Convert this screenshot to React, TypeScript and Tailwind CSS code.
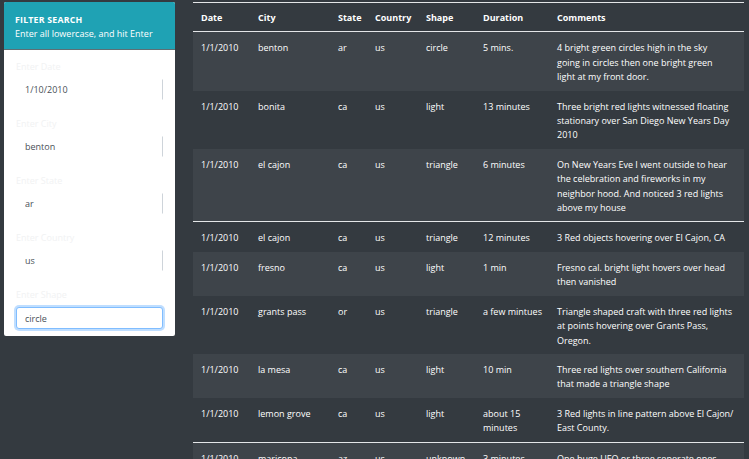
import React from 'react'

interface Sighting {
  date: string
  city: string
  state: string
  country: string
  shape: string
  duration: string
  comments: string
  ruled?: boolean
}

const SIGHTINGS: Sighting[] = [
  { date: '1/1/2010', city: 'benton', state: 'ar', country: 'us', shape: 'circle', duration: '5 mins.', comments: '4 bright green circles high in the sky\ngoing in circles then one bright green\nlight at my front door.' },
  { date: '1/1/2010', city: 'bonita', state: 'ca', country: 'us', shape: 'light', duration: '13 minutes', comments: 'Three bright red lights witnessed floating stationary over San Diego New Years Day 2010' },
  { date: '1/1/2010', city: 'el cajon', state: 'ca', country: 'us', shape: 'triangle', duration: '6 minutes', comments: 'On New Years Eve I went outside to hear the celebration and fireworks in my neighbor hood. And noticed 3 red lights above my house' },
  { date: '1/1/2010', city: 'el cajon', state: 'ca', country: 'us', shape: 'triangle', duration: '12 minutes', comments: '3 Red objects hovering over El Cajon, CA', ruled: true },
  { date: '1/1/2010', city: 'fresno', state: 'ca', country: 'us', shape: 'light', duration: '1 min', comments: 'Fresno cal. bright light hovers over head then vanished' },
  { date: '1/1/2010', city: 'grants pass', state: 'or', country: 'us', shape: 'triangle', duration: 'a few mintues', comments: 'Triangle shaped craft with three red lights at points hovering over Grants Pass, Oregon.' },
  { date: '1/1/2010', city: 'la mesa', state: 'ca', country: 'us', shape: 'light', duration: '10 min', comments: 'Three red lights over southern California that made a triangle shape' },
  { date: '1/1/2010', city: 'lemon grove', state: 'ca', country: 'us', shape: 'light', duration: 'about 15 minutes', comments: '3 Red lights in line pattern above El Cajon/ East County.' },
  { date: '1/1/2010', city: 'maricopa', state: 'az', country: 'us', shape: 'unknown', duration: '3 minutes', comments: 'One huge UFO or three seperate ones flying in a tight formation over the desert', ruled: true },
]

const FILTERS = [
  { label: 'Enter Date', value: '1/10/2010' },
  { label: 'Enter City', value: 'benton' },
  { label: 'Enter State', value: 'ar' },
  { label: 'Enter Country', value: 'us' },
  { label: 'Enter Shape', value: 'circle', focused: true },
]

const COLUMNS = [
  { label: 'Date', w: 'w-[57px]' },
  { label: 'City', w: 'w-[80px]' },
  { label: 'State', w: 'w-[37px]' },
  { label: 'Country', w: 'w-[51px]' },
  { label: 'Shape', w: 'w-[57px]' },
  { label: 'Duration', w: 'w-[74px]' },
  { label: 'Comments', w: 'w-[195px]' },
]

export default function App() {
  return (
    <div className="min-h-screen bg-[#343a40] font-['Open_Sans','Liberation_Sans',sans-serif] text-[9px] text-white">
      <div className="flex items-start pt-[2px] pl-[4px]">
        {/* Filter card */}
        <aside className="w-[171px] bg-white rounded-[2px] overflow-hidden">
          <div className="bg-[#1fa2b4] border-b border-[#5e6f74] px-[11px] pt-[12px] pb-[8px]">
            <h5 className="text-[8.8px] font-bold tracking-[0.2px] leading-[13px]">FILTER SEARCH</h5>
            <p className="text-[9px] leading-[14px]">Enter all lowercase, and hit Enter</p>
          </div>
          <div className="px-[12px] pt-[10px] pb-[7px] flex flex-col gap-[17px]">
            {FILTERS.map(f => (
              <div key={f.label}>
                <label className="block text-[9px] leading-[14px] text-[#f1f2f3] mb-[5px]">{f.label}</label>
                <input
                  readOnly
                  value={f.value}
                  className={
                    f.focused
                      ? 'w-[147px] h-[22px] px-[8px] text-[9px] text-[#495057] bg-white border border-[#80bdff] rounded-[3px] shadow-[0_0_0_2px_rgba(0,123,255,0.25)] outline-none'
                      : 'w-[147px] h-[21px] px-[8px] text-[9px] text-[#495057] bg-white border border-transparent border-r-[#ced4da] outline-none'
                  }
                />
              </div>
            ))}
          </div>
        </aside>

        {/* Results table */}
        <div className="ml-[18px] w-[551px]">
          <table className="w-full table-fixed border-collapse">
            <thead>
              <tr className="border-t border-b border-[#e4e6e8]">
                {COLUMNS.map(c => (
                  <th key={c.label} className={`${c.w} text-left font-bold pl-[8px] pr-[4px] pt-[8px] pb-[6px] leading-[14.4px]`}>{c.label}</th>
                ))}
              </tr>
            </thead>
            <tbody>
              {SIGHTINGS.map((s, i) => (
                <tr
                  key={i}
                  className={`${i % 2 === 0 ? 'bg-white/5' : ''} ${s.ruled ? 'border-t border-[#e4e6e8]' : ''}`}
                >
                  {[s.date, s.city, s.state, s.country, s.shape, s.duration].map((v, j) => (
                    <td key={j} className="align-top pl-[8px] pr-[3px] pt-[9px] pb-[6px] leading-[14.4px]">{v}</td>
                  ))}
                  <td className="align-top whitespace-pre-line pl-[8px] pr-[7px] pt-[9px] pb-[6px] leading-[14.4px]">{s.comments}</td>
                </tr>
              ))}
            </tbody>
          </table>
        </div>
      </div>
    </div>
  )
}
